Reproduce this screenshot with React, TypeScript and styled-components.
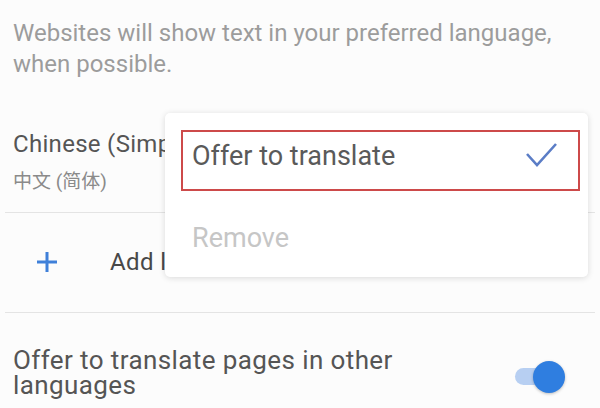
import React from "react";
import styled, { createGlobalStyle } from "styled-components";

const GlobalStyle = createGlobalStyle`
  html, body {
    margin: 0;
    padding: 0;
    background: #fcfcfc;
  }
  body {
    font-family: Roboto, "Noto Sans CJK SC", sans-serif;
    overflow: hidden;
  }
`;

const Screen = styled.div`
  position: relative;
  width: 600px;
  height: 408px;
  overflow: hidden;
  background: #fcfcfc;
`;

const Description = styled.p`
  margin: 0;
  padding: 17.7px 13px 0;
  font-size: 24px;
  line-height: 31.5px;
  color: #9c9c9c;
`;

const LangRow = styled.div`
  margin: 0 5px;
  padding: 49.3px 13px 18px 8px;
  border-bottom: 1px solid #e4e4e4;
`;

const LangTitle = styled.div`
  font-size: 24px;
  line-height: 28px;
  color: #555;
  white-space: nowrap;
  letter-spacing: 0.3px;
`;

const LangSub = styled.div`
  margin-top: 11.7px;
  font-size: 19px;
  line-height: 24px;
  color: #8a8a8a;
`;

const AddRow = styled.div`
  display: flex;
  align-items: center;
  height: 99px;
  margin: 0 5px;
  border-bottom: 1px solid #e4e4e4;
`;

const PlusIcon = styled.svg`
  width: 24px;
  height: 24px;
  margin-left: 30px;
  margin-right: 51px;
`;

const AddLabel = styled.span`
  font-size: 24px;
  color: #484848;
  white-space: nowrap;
  letter-spacing: 0.4px;
`;

const ToggleRow = styled.div`
  display: flex;
  align-items: flex-start;
  justify-content: space-between;
  padding: 35.6px 33px 0 13px;
`;

const ToggleText = styled.div`
  width: 430px;
  font-size: 26px;
  line-height: 25px;
  color: #555;
  letter-spacing: 0.4px;
`;

const Switch = styled.div`
  position: relative;
  width: 52px;
  height: 32px;
  margin-top: 13px;
`;

const Track = styled.div`
  position: absolute;
  left: 0;
  top: 7px;
  width: 44px;
  height: 17px;
  border-radius: 9px;
  background: #b7cff2;
`;

const Thumb = styled.div`
  position: absolute;
  right: 2px;
  top: 0;
  width: 32px;
  height: 32px;
  border-radius: 50%;
  background: #2f7ee0;
  box-shadow: 0 1px 3px rgba(0, 0, 0, 0.25);
`;

const Menu = styled.div`
  position: absolute;
  left: 165px;
  top: 113px;
  width: 423px;
  height: 164px;
  box-sizing: border-box;
  padding: 17px 8px 0 16px;
  background: #fff;
  border-radius: 5px;
  box-shadow: 0 1px 6px rgba(0, 0, 0, 0.14);
`;

const MenuItem = styled.div<{ $highlighted?: boolean; $disabled?: boolean }>`
  display: flex;
  justify-content: space-between;
  box-sizing: border-box;
  height: ${(p) => (p.$highlighted ? "61px" : "auto")};
  padding: ${(p) => (p.$highlighted ? "8px 21px 0 9px" : "0 0 0 11px")};
  margin-top: ${(p) => (p.$highlighted ? "0" : "30.8px")};
  align-items: ${(p) => (p.$highlighted ? "flex-start" : "center")};
  border: ${(p) => (p.$highlighted ? "2px solid #cd4a4a" : "none")};
  font-size: 27px;
  line-height: 32px;
  color: ${(p) => (p.$disabled ? "#c6c6c6" : "#5a5a5a")};
`;

const Check = styled.svg`
  width: 31px;
  height: 24px;
  margin-top: 3px;
`;

export default function App() {
  return (
    <Screen>
      <GlobalStyle />
      <Description>
        Websites will show text in your preferred language,
        <br />
        when possible.
      </Description>
      <LangRow>
        <LangTitle>Chinese (Simplified)</LangTitle>
        <LangSub>中文 (简体)</LangSub>
      </LangRow>
      <AddRow>
        <PlusIcon viewBox="0 0 24 24">
          <path d="M12 2v20M2 12h20" stroke="#3f80d9" strokeWidth="3" fill="none" />
        </PlusIcon>
        <AddLabel>Add language</AddLabel>
      </AddRow>
      <ToggleRow>
        <ToggleText>Offer to translate pages in other languages</ToggleText>
        <Switch>
          <Track />
          <Thumb />
        </Switch>
      </ToggleRow>
      <Menu>
        <MenuItem $highlighted>
          <span>Offer to translate</span>
          <Check viewBox="0 0 31 24">
            <path d="M1 11l10 11L30 1" stroke="#5b7dc6" strokeWidth="2.6" fill="none" />
          </Check>
        </MenuItem>
        <MenuItem $disabled>Remove</MenuItem>
      </Menu>
    </Screen>
  );
}
